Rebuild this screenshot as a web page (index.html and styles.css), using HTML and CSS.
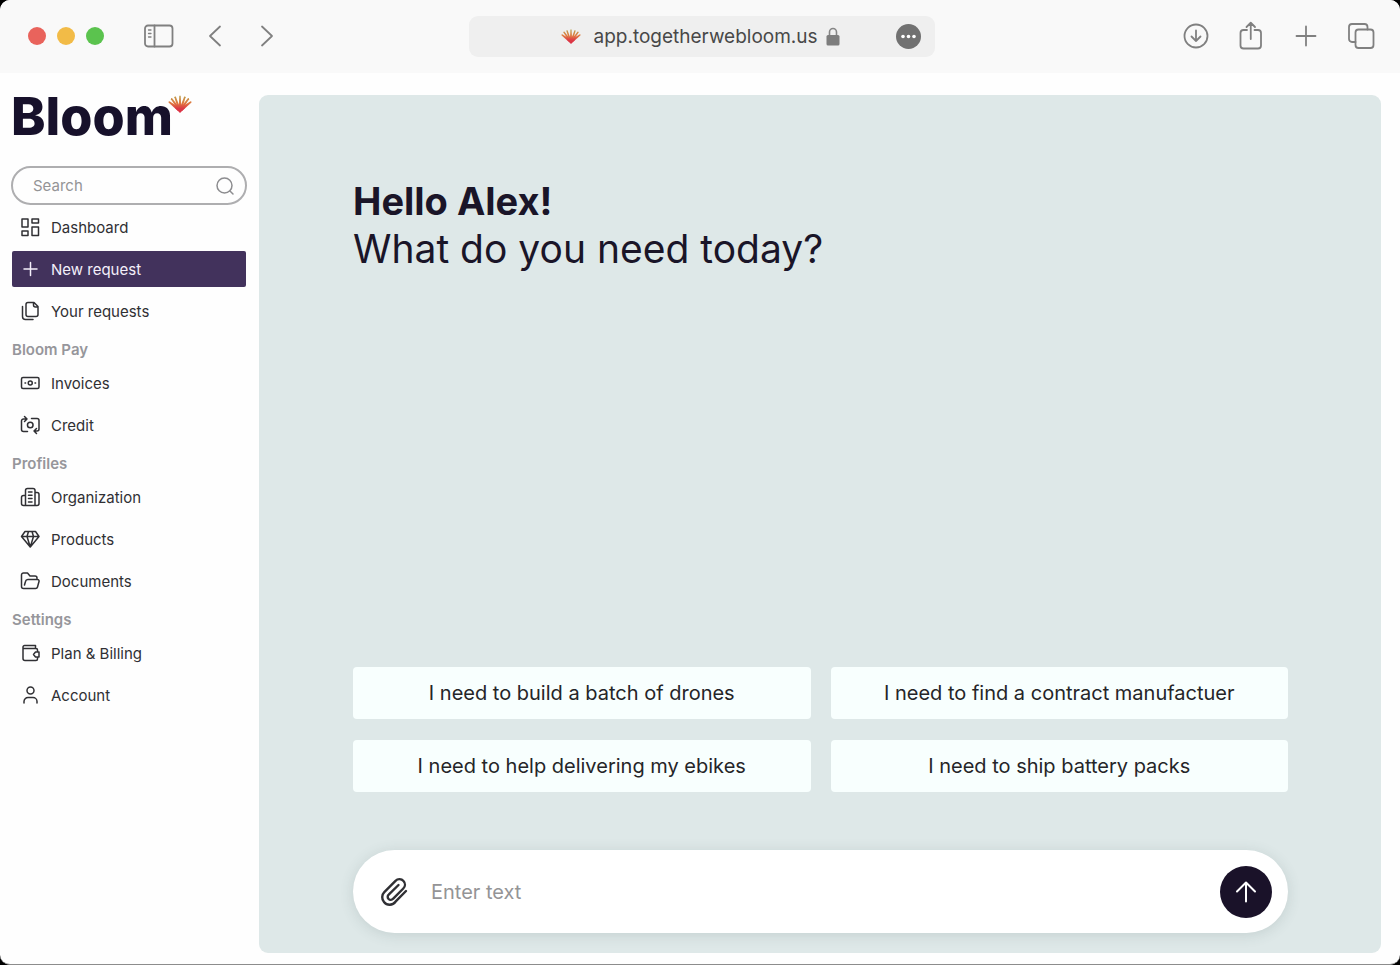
FILE: index.html
```html
<!DOCTYPE html>
<html lang="en">
<head>
<meta charset="utf-8">
<meta name="viewport" content="width=device-width, initial-scale=1">
<title>Bloom – New request</title>
<link rel="stylesheet" href="styles.css">
</head>
<body>
<svg class="defs" width="0" height="0" aria-hidden="true">
  <defs>
    <linearGradient id="flame" gradientUnits="userSpaceOnUse" x1="0" y1="0" x2="0" y2="18">
      <stop offset="0" stop-color="#b9a24c"/>
      <stop offset=".45" stop-color="#e0783f"/>
      <stop offset=".75" stop-color="#dc3a45"/>
      <stop offset="1" stop-color="#dc2f45"/>
    </linearGradient>
    <symbol id="bloom-mark" viewBox="0 0 24 18">
      <g fill="url(#flame)">
        <path d="M10.500 16 11.300 1Q12-.2 12.700 1L13.500 16z"/>
        <path d="M10.500 16 6.400 2.200Q6.600 1 7.800 1.600L13 15z"/>
        <path d="M13.500 16 17.600 2.200Q17.400 1 16.200 1.600L11 15z"/>
        <path d="M10 15 2.900 4.200Q2.800 3 4 3.100L12.500 14z"/>
        <path d="M14 15 21.100 4.200Q21.200 3 20 3.100L11.500 14z"/>
        <path d="M10 16 .5 7.500Q.2 6.200 1.500 6.200L12 13z"/>
        <path d="M14 16 23.500 7.500Q23.800 6.200 22.500 6.200L12 13z"/>
        <path d="M12 18 7 13 10 10.500H14L17 13z"/>
      </g>
    </symbol>
  </defs>
</svg>
<div class="window">
  <header class="toolbar">
    <div class="toolbar-left">
      <div class="lights">
        <button class="light light-close" aria-label="Close"></button>
        <button class="light light-min" aria-label="Minimize"></button>
        <button class="light light-max" aria-label="Zoom"></button>
      </div>
      <button class="tool tool-sidebar" aria-label="Sidebar">
        <svg width="30" height="24" viewBox="0 0 30 24"><rect x="1" y="1.500" width="27.500" height="21" rx="3"/><path d="M10.500 1.500v21"/><path class="fine" d="M4.500 6h2.500M4.500 9.500h2.500M4.500 13h2.500"/></svg>
      </button>
      <div class="history">
        <button class="tool" aria-label="Back"><svg width="16" height="24" viewBox="0 0 16 24"><path d="M13 2.500 3 12l10 9.500"/></svg></button>
        <button class="tool" aria-label="Forward"><svg width="16" height="24" viewBox="0 0 16 24"><path d="m3 2.500 10 9.500L3 21.500"/></svg></button>
      </div>
    </div>
    <div class="address">
      <svg class="favicon" width="20" height="15"><use href="#bloom-mark"/></svg>
      <input class="url" type="text" aria-label="Address" value="app.togetherwebloom.us">
      <svg class="lock" width="14" height="19" viewBox="0 0 14 19"><path d="M3.500 9V5a3.500 3.500 0 0 1 7 0v4" fill="none" stroke="#858585" stroke-width="1.600"/><rect x=".5" y="8" width="13" height="10.500" rx="1.500" fill="#7d7d7d"/></svg>
      <button class="page-menu" aria-label="Page menu"><svg width="25" height="25" viewBox="0 0 25 25"><circle cx="12.500" cy="12.500" r="12.500" fill="#717171"/><g fill="#fff"><circle cx="7" cy="12.500" r="1.800"/><circle cx="12.500" cy="12.500" r="1.800"/><circle cx="18" cy="12.500" r="1.800"/></g></svg></button>
    </div>
    <div class="toolbar-right">
      <button class="tool" aria-label="Downloads"><svg width="28" height="30" viewBox="0 0 28 30"><circle cx="14" cy="15" r="11.500"/><path d="M14 9.500v10.500M9.500 15.500 14 20l4.500-4.500"/></svg></button>
      <button class="tool" aria-label="Share"><svg width="28" height="30" viewBox="0 0 28 30"><path d="M10 9H6.500a3 3 0 0 0-3 3v12.500a3 3 0 0 0 3 3h14.500a3 3 0 0 0 3-3V12a3 3 0 0 0-3-3H17.500M13.750 18V2M9.500 6l4.250-4.250L18 6"/></svg></button>
      <button class="tool" aria-label="New tab"><svg width="28" height="30" viewBox="0 0 28 30"><path d="M14 5.500v19M4.500 15h19"/></svg></button>
      <button class="tool" aria-label="Tab overview"><svg width="28" height="30" viewBox="0 0 28 30"><rect x="8.500" y="8.500" width="18" height="18.500" rx="3"/><path d="M8.500 21H5a3 3 0 0 1-3-3V6a3 3 0 0 1 3-3h12.500a3 3 0 0 1 3 3v2.500"/></svg></button>
    </div>
  </header>

  <div class="app">
    <aside class="sidebar">
      <a class="logo" href="#">Bloom<svg class="logo-mark" width="24" height="18"><use href="#bloom-mark"/></svg></a>
      <label class="search">
        <input type="search" placeholder="Search" aria-label="Search">
        <svg width="20" height="20" viewBox="0 0 20 20"><circle cx="9.500" cy="9.500" r="7.500"/><path d="m15 15 3 3"/></svg>
      </label>
      <nav class="nav">
        <div class="group">
          <a class="item" href="#"><svg viewBox="0 0 20 20"><path d="M2 2h6v8H2zM12 2h6.500v4H12zM12 10h6.500v8.500H12zM2 14h6v4.500H2z"/></svg>Dashboard</a>
          <a class="item active" href="#" aria-current="page"><svg viewBox="0 0 20 20"><path d="M10.500 3.500v13M4 10h13"/></svg>New request</a>
          <a class="item" href="#"><svg viewBox="0 0 20 20"><path d="M8 1.500h6l4 4v8a2 2 0 0 1-2 2H8a2 2 0 0 1-2-2v-10a2 2 0 0 1 2-2zM13.500 1.500V4a2 2 0 0 0 2 2H18M2.500 5.500v10a3 3 0 0 0 3 3H13"/></svg>Your requests</a>
        </div>
        <div class="group">
          <h2 class="group-title">Bloom Pay</h2>
          <a class="item" href="#"><svg viewBox="0 0 20 20"><rect x="1.500" y="4.500" width="17.500" height="11" rx="1.500"/><circle cx="10.250" cy="10" r="2"/><path d="M5 10h.6M15 10h.6"/></svg>Invoices</a>
          <a class="item" href="#"><svg viewBox="0 0 20 20"><circle cx="10.250" cy="10" r="2.800"/><path d="M7 4H3.500a2 2 0 0 0-2 2v8.500a2 2 0 0 0 2 2H7.500M4.500 1.500 7 4 4.500 6.500M11.500 3.500H17a2 2 0 0 1 2 2v8.500a2 2 0 0 1-2 2h-3M16.500 13.500 14 16l2.500 2.500"/></svg>Credit</a>
        </div>
        <div class="group">
          <h2 class="group-title">Profiles</h2>
          <a class="item" href="#"><svg viewBox="0 0 20 20"><path d="M5.500 18.500v-15a2 2 0 0 1 2-2H13a2 2 0 0 1 2 2v15M5.500 8.500h-2a2 2 0 0 0-2 2v6a2 2 0 0 0 2 2H17a2 2 0 0 0 2-2v-9a2 2 0 0 0-2-2h-2M8.500 5H12M8.500 8.300H12M8.500 11.600H12M8.500 15H12"/></svg>Organization</a>
          <a class="item" href="#"><svg viewBox="0 0 20 20"><path d="M5 2.500h10.500l3.500 5L10.250 18 1.500 7.500zM1.500 7.500H19M8.500 2.500 7 7.500 10.250 18 13.500 7.500l-1.500-5"/></svg>Products</a>
          <a class="item" href="#"><svg viewBox="0 0 20 20"><path d="M3.500 17.500a2 2 0 0 1-2-2V4a2 2 0 0 1 2-2h4l2.500 3h5a2 2 0 0 1 2 2v1.500M3.500 17.500h12a2 2 0 0 0 2-1.500L19 10.500a1.500 1.500 0 0 0-1.500-2H8a2.500 2.500 0 0 0-2.500 2L4.500 14"/></svg>Documents</a>
        </div>
        <div class="group">
          <h2 class="group-title">Settings</h2>
          <a class="item" href="#"><svg viewBox="0 0 20 20"><path d="M17.500 8V7A1.500 1.500 0 0 0 16 5.500H3V4a1.500 1.500 0 0 1 1.500-1.500H15.500v3M3 4v11.500a2 2 0 0 0 2 2H16a1.500 1.500 0 0 0 1.500-1.500v-1.500M15.500 9H19v5h-3.500L13.500 11.500z"/></svg>Plan &amp; Billing</a>
          <a class="item" href="#"><svg viewBox="0 0 20 20"><circle cx="10.500" cy="5.500" r="3.500"/><path d="M4 18v-1.500a4 4 0 0 1 4-4h5a4 4 0 0 1 4 4V18"/></svg>Account</a>
        </div>
      </nav>
    </aside>

    <main class="panel">
      <h1 class="greeting"><strong>Hello Alex!</strong><span>What do you need today?</span></h1>
      <div class="suggestions">
        <button class="suggestion">I need to build a batch of drones</button>
        <button class="suggestion">I need to find a contract manufactuer</button>
        <button class="suggestion">I need to help delivering my ebikes</button>
        <button class="suggestion">I need to ship battery packs</button>
      </div>
      <form class="composer">
        <button class="attach" type="button" aria-label="Attach file"><svg width="30" height="30" viewBox="0 0 30 30"><path d="M27 14 16.500 24.700a7.200 7.200 0 0 1-11.500.3 7.200 7.200 0 0 1 .3-9.800L16.500 3.800a5.400 5.400 0 0 1 8 .2 5.400 5.400 0 0 1-.2 7.500L14 21.800a3 3 0 0 1-4.400.2 3 3 0 0 1 .1-4.400L19.500 8"/></svg></button>
        <input class="message" type="text" placeholder="Enter text" aria-label="Message">
        <button class="send" type="submit" aria-label="Send"><svg width="24" height="24" viewBox="0 0 24 24"><path d="M12 21.500V2.500M3 11.500l9-9 9 9"/></svg></button>
      </form>
    </main>
  </div>
</div>
</body>
</html>
```
FILE: styles.css
```css
* { box-sizing: border-box; }

body {
  margin: 0;
  background: #000;
  color: #1a1528;
  font-family: Inter, "Liberation Sans", sans-serif;
}

button, input { font: inherit; color: inherit; }
button { padding: 0; border: 0; background: none; cursor: pointer; }
input { min-width: 0; padding: 0; border: 0; outline: 0; background: none; }
a { color: inherit; text-decoration: none; }
svg { display: block; flex: none; }
.defs { position: absolute; }

.window {
  display: flex;
  flex-direction: column;
  min-height: 100vh;
  background: #fefefe;
  border-bottom: 1px solid #8c8c8c;
  border-radius: 10px;
  overflow: hidden;
}

/* Browser toolbar */
.toolbar {
  display: grid;
  grid-template-columns: 1fr minmax(300px, 466px) 1fr;
  align-items: center;
  height: 73px;
  padding: 0 25px 1px 28px;
  background: #f9f9f9;
}
.toolbar-left, .lights, .history, .toolbar-right { display: flex; align-items: center; }
.lights { gap: 11px; }
.light { width: 18px; height: 18px; border-radius: 50%; }
.light-close { background: #e9635c; }
.light-min { background: #f2bb47; }
.light-max { background: #5bc34e; }
.tool svg { fill: none; stroke: #808080; stroke-width: 1.8; stroke-linecap: round; stroke-linejoin: round; }
.tool .fine { stroke-width: 1.3; }
.tool-sidebar { margin-left: 40px; }
.history { gap: 36px; margin-left: 33px; }
.toolbar-right { justify-content: flex-end; gap: 27px; }

.address {
  display: flex;
  align-items: center;
  height: 41px;
  padding: 0 14px 0 92px;
  border-radius: 9px;
  background: #efefef;
}
.url { width: 225px; margin-left: 13px; font-size: 19px; color: #484848; }
.lock { margin-left: 7px; }
.page-menu { margin-left: auto; }

/* Application */
.app {
  display: grid;
  grid-template-columns: 247px 1fr;
  gap: 12px;
  flex: 1;
  padding: 22px 19px 11px 0;
}
.sidebar { padding-left: 11px; }
.logo {
  display: flex;
  align-items: flex-start;
  height: 71px;
  font-size: 52px;
  line-height: 44px;
  font-weight: 800;
  color: #17112b;
}
.logo-mark { margin-left: -5px; }
.search {
  display: flex;
  align-items: center;
  height: 39px;
  padding: 0 10px 0 20px;
  border: 2px solid #aeaeb0;
  border-radius: 20px;
  font-size: 15px;
}
.search input { flex: 1; }
.search svg { fill: none; stroke: #8d8d90; stroke-width: 1.5; stroke-linecap: round; }
input::placeholder { color: #949496; opacity: 1; }

.nav { display: flex; flex-direction: column; gap: 12px; padding: 4px 1px 0; }
.group { display: flex; flex-direction: column; gap: 6px; }
.group-title { margin: 0; font-size: 15px; line-height: 18px; font-weight: 600; color: #96969b; }
.item {
  display: flex;
  align-items: center;
  gap: 11px;
  height: 36px;
  padding: 0 8px;
  border-radius: 2px;
  font-size: 15px;
  color: #303034;
}
.item svg { width: 20px; height: 20px; fill: none; stroke: currentColor; stroke-width: 1.5; stroke-linecap: round; stroke-linejoin: round; }
.active { background: #42325c; color: #f4effa; }

.panel {
  display: flex;
  flex-direction: column;
  padding: 83px 93px 20px 94px;
  border-radius: 9px;
  background: #dee8e8;
}
.greeting { margin: 0; font-size: 39px; line-height: 47px; font-weight: 400; }
.greeting strong, .greeting span { display: block; }
.greeting strong { font-size: 38px; font-weight: 700; }

.suggestions { display: grid; grid-template-columns: 1fr 1fr; gap: 21px 20px; margin-top: auto; }
.suggestion { height: 52px; border-radius: 4px; background: #f8fffe; font-size: 20px; color: #252528; }

.composer {
  display: flex;
  align-items: center;
  height: 83px;
  margin-top: 58px;
  padding: 0 16px 0 26px;
  border-radius: 42px;
  background: #fff;
  box-shadow: 0 2px 14px rgb(60 90 90 / 16%);
}
.attach svg { fill: none; stroke: #303034; stroke-width: 2.4; stroke-linecap: round; stroke-linejoin: round; }
.message { flex: 1; margin-left: 22px; font-size: 20px; }
.send { display: grid; place-items: center; width: 52px; height: 52px; border-radius: 50%; background: #1a1229; }
.send svg { fill: none; stroke: #fff; stroke-width: 2; stroke-linecap: round; stroke-linejoin: round; }
```
